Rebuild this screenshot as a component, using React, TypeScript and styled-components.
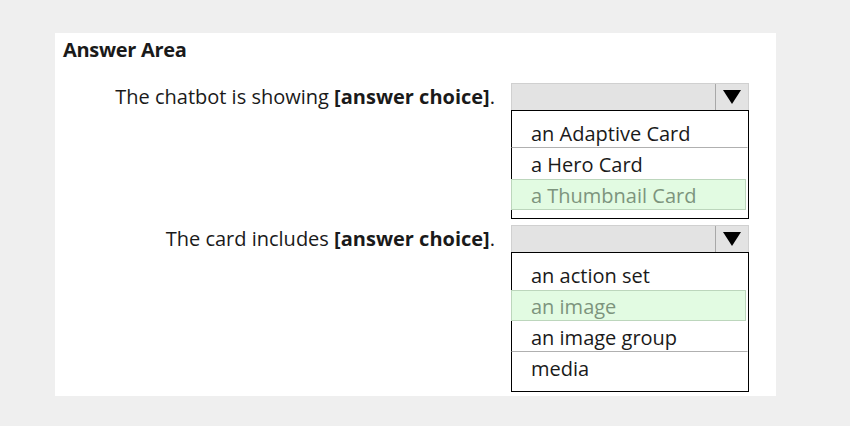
import React from 'react';
import styled, { createGlobalStyle } from 'styled-components';

const GlobalStyle = createGlobalStyle`
	html, body {
		margin: 0;
		padding: 0;
		background: #efefef;
	}

	body {
		font-family: 'Open Sans', 'Noto Sans', sans-serif;
		color: #1a1a1a;
	}
`;

type Question = {
	label: string;
	options: string[];
	selected: number;
	dividers: number[];
};

const questions: Question[] = [
	{
		label: 'The chatbot is showing',
		options: ['an Adaptive Card', 'a Hero Card', 'a Thumbnail Card'],
		selected: 2,
		dividers: [0],
	},
	{
		label: 'The card includes',
		options: ['an action set', 'an image', 'an image group', 'media'],
		selected: 1,
		dividers: [2],
	},
];

const App = () => {
	return (
		<>
			<GlobalStyle />
			<Page>
				<Panel>
					<Title>Answer Area</Title>
					<Rows>
						{questions.map((question) => (
							<Row key={question.label}>
								<Label>
									{question.label} <strong>[answer choice]</strong>.
								</Label>
								<Dropdown>
									<SelectBar>
										<ArrowBox>
											<svg width="18" height="14" viewBox="0 0 18 14">
												<polygon points="0,0 18,0 9,14" fill="#000" />
											</svg>
										</ArrowBox>
									</SelectBar>
									<OptionList>
										{question.options.map((option, index) => (
											<Option
												key={option}
												$selected={index === question.selected}
												$divider={question.dividers.includes(index)}
											>
												{option}
											</Option>
										))}
									</OptionList>
								</Dropdown>
							</Row>
						))}
					</Rows>
				</Panel>
			</Page>
		</>
	);
};

export default App;

const Page = styled.div`
	width: 850px;
	height: 426px;
	padding: 33px 0 0 55px;
	box-sizing: border-box;
`;

const Panel = styled.div`
	width: 721px;
	height: 363px;
	background: #fff;
	box-sizing: border-box;
	padding: 4px 0 0 8px;
`;

const Title = styled.div`
	font-size: 20px;
	font-weight: 700;
	line-height: 26px;
	letter-spacing: -0.3px;
`;

const Rows = styled.div`
	display: flex;
	flex-direction: column;
	gap: 6px;
	margin-top: 20px;
`;

const Row = styled.div`
	display: grid;
	grid-template-columns: 432px 238px;
	column-gap: 16px;
	align-items: start;
`;

const Label = styled.div`
	text-align: right;
	font-size: 20px;
	line-height: 27px;

	strong {
		font-weight: 700;
	}
`;

const Dropdown = styled.div`
	display: flex;
	flex-direction: column;
`;

const SelectBar = styled.div`
	display: flex;
	justify-content: flex-end;
	height: 27px;
	background: #e3e3e3;
	border: 1px solid #d0d0d0;
	border-bottom: none;
	box-sizing: border-box;
`;

const ArrowBox = styled.div`
	display: grid;
	place-items: center;
	width: 32px;
	border-left: 1px solid #a8a8a8;
`;

const OptionList = styled.div`
	display: flex;
	flex-direction: column;
	border: 1px solid #000;
	padding: 6px 0 8px;
`;

const Option = styled.div<{ $selected: boolean; $divider: boolean }>`
	height: 31px;
	line-height: 31px;
	padding-left: 19px;
	font-size: 20px;
	box-sizing: border-box;
	color: ${({ $selected }) => ($selected ? '#7d947d' : '#1a1a1a')};
	background: ${({ $selected }) => ($selected ? '#e2fbe2' : 'transparent')};
	border: 1px solid ${({ $selected }) => ($selected ? '#bcd6bc' : 'transparent')};
	border-bottom-color: ${({ $selected, $divider }) =>
		$selected ? '#bcd6bc' : $divider ? '#b0b0b0' : 'transparent'};
	margin-right: ${({ $selected }) => ($selected ? '2px' : '0')};
	margin-left: -1px;
`;
